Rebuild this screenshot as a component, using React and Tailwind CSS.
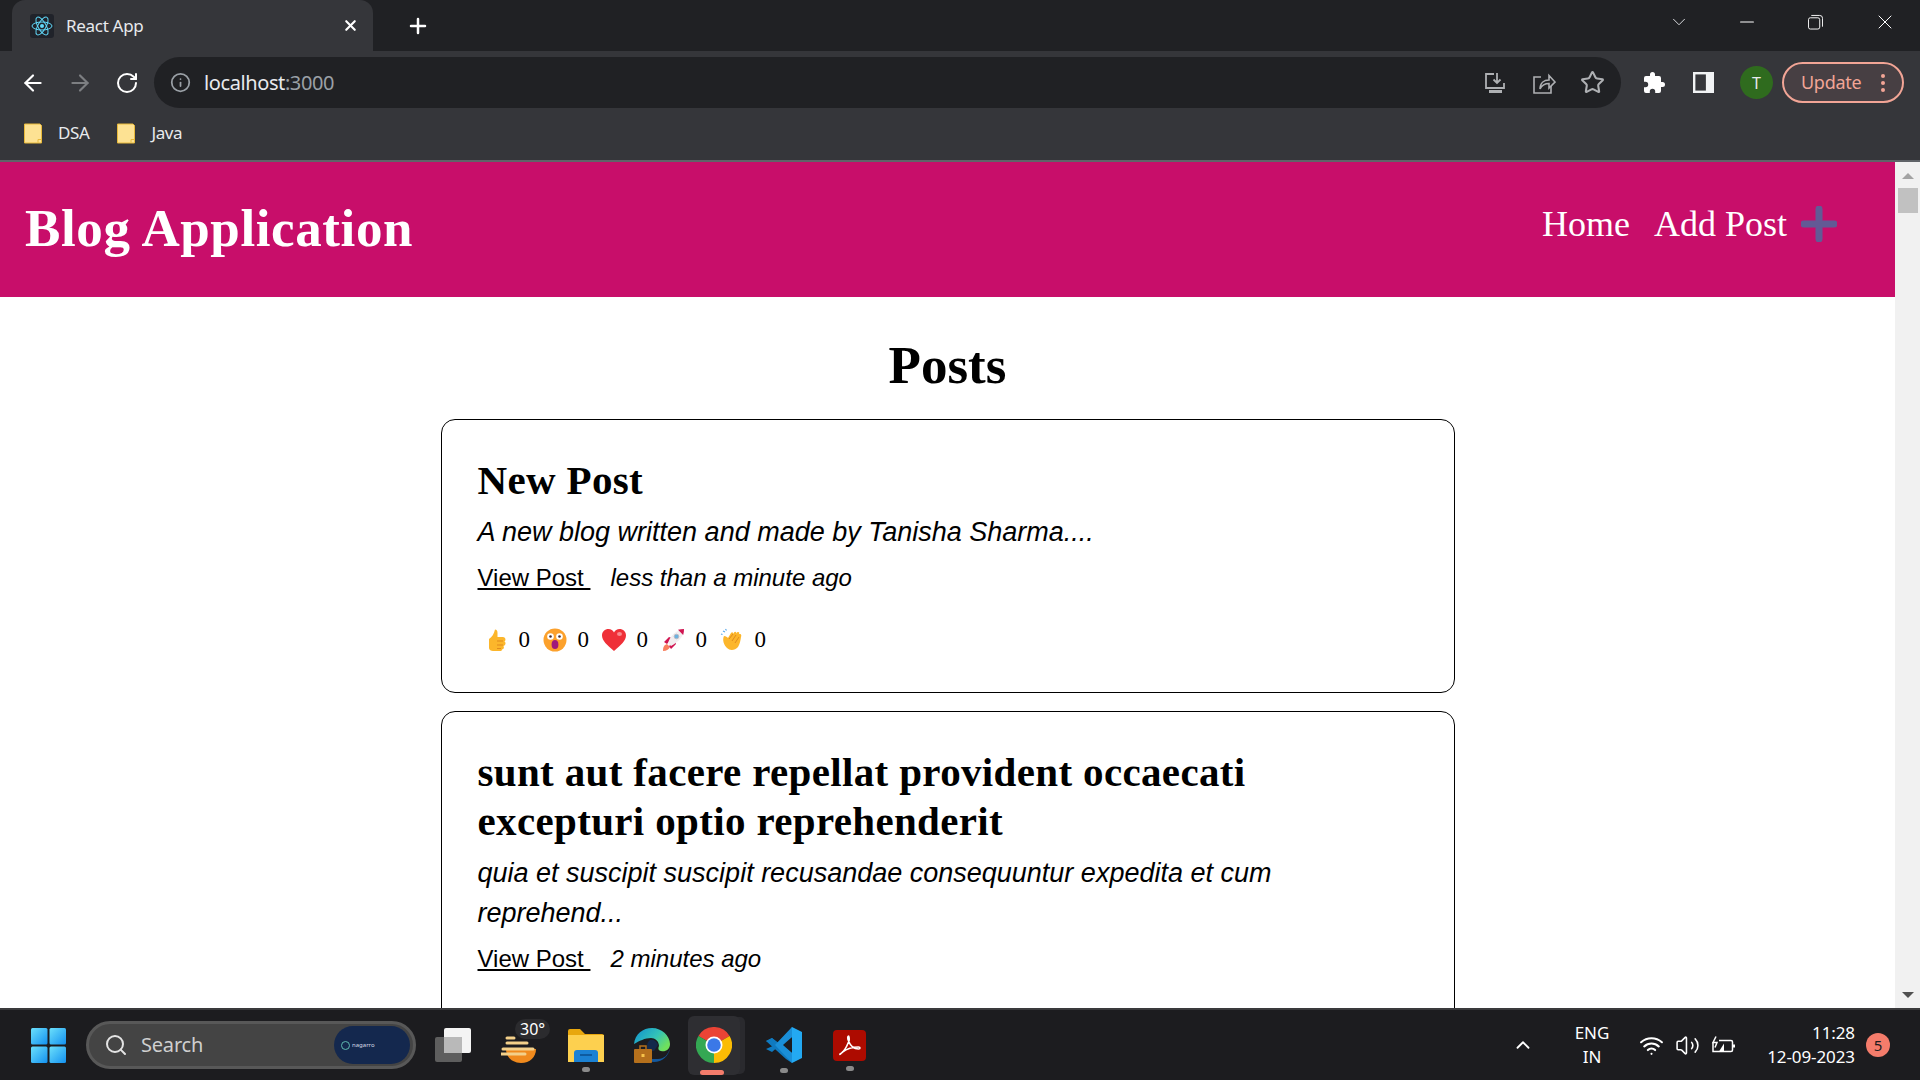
import { ArrowLeft, ArrowRight, RotateCw, Info, Star, Plus, X, Minus, ChevronDown, ChevronUp, Search, Wifi, Volume2 } from 'lucide-react';

const serif = 'font-["Liberation_Serif",serif]';
const ui = 'font-["Noto_Sans",sans-serif]';

const ReactLogo = () => (
  <svg viewBox="0 0 24 24" className="w-[24px] h-[24px] bg-[#20232a] rounded-[3px]" fill="none" stroke="#61dafb" strokeWidth="1">
    <circle cx="12" cy="12" r="2" fill="#61dafb" stroke="none" />
    <ellipse cx="12" cy="12" rx="10" ry="4" />
    <ellipse cx="12" cy="12" rx="10" ry="4" transform="rotate(60 12 12)" />
    <ellipse cx="12" cy="12" rx="10" ry="4" transform="rotate(120 12 12)" />
  </svg>
);

const BookmarkFolder = () => (
  <svg viewBox="0 0 18 20" className="w-[18px] h-[21px]">
    <path d="M0.5 0.5h15.5l1.5 1.5v17.5h-17z" fill="#fde293" stroke="#e8b93a" />
    <path d="M14 19v-3h3.5" fill="none" stroke="#e8b93a" />
  </svg>
);

const DownloadIcon = () => (
  <svg viewBox="0 0 24 24" className="w-[24px] h-[24px]" fill="none" stroke="#aeb0b3" strokeWidth="1.8">
    <path d="M11 3H3v14h18v-5" />
    <path d="M14 2v10M10.5 8.5L14 12l3.5-3.5" />
    <path d="M6 20.5h13" strokeWidth="3" />
  </svg>
);

const ShareIcon = () => (
  <svg viewBox="0 0 24 24" className="w-[24px] h-[24px]" fill="none" stroke="#aeb0b3" strokeWidth="1.6">
    <path d="M9 6H2v16h17v-7" />
    <path d="M8 18c0-6 4-9 9-9V4.500l6 6.500-6 6v-4.500c-4 0-7 1.500-9 5.500z" />
  </svg>
);

const PuzzleIcon = () => (
  <svg viewBox="0 0 24 24" className="w-[24px] h-[24px]" fill="#ffffff">
    <path d="M20.500 11H19V7a2 2 0 0 0-2-2h-4V3.500a2.500 2.500 0 0 0-5 0V5H4a2 2 0 0 0-2 2v3.800h1.500a2.700 2.700 0 0 1 0 5.400H2V20a2 2 0 0 0 2 2h3.800v-1.500a2.700 2.700 0 0 1 5.400 0V22H17a2 2 0 0 0 2-2v-4h1.500a2.500 2.500 0 0 0 0-5z" />
  </svg>
);

const PanelIcon = () => (
  <svg viewBox="0 0 22 26" className="w-[21px] h-[21px]" preserveAspectRatio="none">
    <rect width="22" height="26" fill="#f1f3f4" />
    <rect x="2.500" y="3" width="11" height="20" fill="#35363a" />
  </svg>
);

const RestoreIcon = () => (
  <svg viewBox="0 0 16 16" className="w-[15px] h-[16px]" fill="none" stroke="#ffffff" strokeWidth="1">
    <rect x="0.500" y="3.500" width="12" height="12" rx="2" />
    <path d="M3.500 1h9a3 3 0 0 1 3 3v9" />
  </svg>
);

const Thumb = () => (
  <svg viewBox="0 0 24 24" className="w-[24px] h-[24px]">
    <path d="M11 1.500c1.800 0 2.500 1.500 2.500 3.500v4H19a2.500 2.500 0 0 1 1.500 4.500 2.500 2.500 0 0 1-1 4.500 2.500 2.500 0 0 1-1.500 3.500c0 1-1 1.500-2 1.500H9c-2 0-4-1-4-3V11c3-2 5-5 6-9.500z" fill="#fcb62b" />
    <path d="M13 13h6M13 17h6M13 20.500h4" stroke="#e08a1e" strokeWidth="1" />
  </svg>
);

const Wow = () => (
  <svg viewBox="0 0 24 24" className="w-[24px] h-[24px]">
    <circle cx="12" cy="12" r="11.500" fill="#fca12c" />
    <circle cx="7.500" cy="8.500" r="3.300" fill="#fff" />
    <circle cx="16.500" cy="8.500" r="3.300" fill="#fff" />
    <circle cx="7.500" cy="8.500" r="1.300" fill="#402a32" />
    <circle cx="16.500" cy="8.500" r="1.300" fill="#402a32" />
    <ellipse cx="12" cy="16.500" rx="3.400" ry="4.500" fill="#a0197c" />
  </svg>
);

const Heart = () => (
  <svg viewBox="0 0 24 24" className="w-[24px] h-[24px]">
    <path d="M12 23C5 17 0 12.500 0 7.500 0 3.500 3 1 6.500 1 9 1 11 2.500 12 4.500 13 2.500 15 1 17.500 1 21 1 24 3.500 24 7.500c0 5-5 9.500-12 15.500z" fill="#ef3038" />
    <ellipse cx="17.500" cy="6" rx="2.500" ry="2" fill="#f98a8f" />
  </svg>
);

const Rocket = () => (
  <svg viewBox="0 0 24 24" className="w-[24px] h-[24px]">
    <path d="M2 23c0-4 1-6 4-7l3 3c-1 2-3 4-7 4z" fill="#f8805f" />
    <path d="M3 14l5-5 3 1-5 6zM10 21l5-5-1-3-6 5z" fill="#d01551" />
    <path d="M7 15C9 8 15 2 23 1c0 8-6 13-13 17z" fill="#f2eef0" />
    <path d="M17 1.800c2-.5 4-.8 6-.8 0 2-.3 4-.8 6z" fill="#d01551" />
    <circle cx="15.500" cy="8.500" r="2.300" fill="#6cb2e0" stroke="#b9bcc6" />
  </svg>
);

const Clap = () => (
  <svg viewBox="0 0 24 24" className="w-[24px] h-[24px]">
    <path d="M3 3l2 1M5.500 1l1 1.500M1 6l1.500.5" stroke="#5aa7e8" strokeWidth="1.200" />
    <path d="M4 8c2 0 3 1 4 2l3-5c1-1.500 2.500-.5 2 1l1-1.500c1-1.500 3-.5 2 1l1-1c1.500-1 3 0 2 1.500l1 0c1.500 0 1.500 2 1 3-.5 3-1 7-3 10-3 3.500-8 4-11 1-3-3-5-8-3-12z" fill="#fcb62b" />
    <path d="M9 11l4-5M12 13l4-6M15 15l4-6" stroke="#e08a1e" strokeWidth="1" fill="none" />
  </svg>
);

const reactions = [Thumb, Wow, Heart, Rocket, Clap];

function Reactions() {
  return (
    <div className="flex items-center mt-[32px] h-[28px] pl-[6px]">
      {reactions.map((Emoji, i) => (
        <div key={i} className="flex items-center">
          <Emoji />
          <span className={`${serif} text-[23px] text-black ml-[11px] mr-[11px] w-[13px]`}>0</span>
        </div>
      ))}
    </div>
  );
}

function PostCard({ title, excerpt, time }) {
  return (
    <div className="border border-black rounded-[14px] px-[36px] pt-[36px] pb-[38px] mb-[18px]">
      <h2 className={`${serif} font-bold text-[41px] leading-[49px] text-black tracking-[0.35px]`}>{title}</h2>
      <p className="font-['Liberation_Sans',sans-serif] italic text-[27px] leading-[40px] mt-[7px] text-black">{excerpt}</p>
      <div className="flex items-baseline mt-[10px] font-['Liberation_Sans',sans-serif] text-[24px] leading-[32px] text-black">
        <a className="underline whitespace-pre mr-[20px]">View Post </a>
        <span className="italic">{time}</span>
      </div>
      <Reactions />
    </div>
  );
}

function BrowserChrome() {
  return (
    <div className={`${ui} shrink-0`}>
      {/* tab strip */}
      <div className="h-[51px] bg-[#202124] flex items-end relative">
        <div className="ml-[12px] w-[361px] h-[51px] bg-[#35363a] rounded-t-[13px] flex items-center pl-[18px] pr-[14px]">
          <ReactLogo />
          <span className="ml-[12px] text-[17px] text-[#e8eaed] flex-1 tracking-[-0.3px]">React App</span>
          <X size={17} color="#ffffff" strokeWidth={3} />
        </div>
        <Plus size={24} color="#ffffff" strokeWidth={2.5} className="ml-[33px] mb-[13px]" />
        <div className="ml-auto flex items-center h-[51px] pb-[7px]">
          <ChevronDown size={22} color="#e8eaed" strokeWidth={1} />
          <div className="ml-[46px]"><Minus size={22} color="#ffffff" strokeWidth={1.2} /></div>
          <div className="ml-[50px]"><RestoreIcon /></div>
          <div className="ml-[50px] mr-[23px]"><X size={24} color="#ffffff" strokeWidth={1} /></div>
        </div>
      </div>
      {/* toolbar */}
      <div className="h-[58px] bg-[#35363a] flex items-start pt-[6px]">
        <div className="h-[51px] flex items-center pl-[20px]">
          <ArrowLeft size={26} color="#ffffff" strokeWidth={2} />
          <ArrowRight size={26} color="#7d7f82" strokeWidth={2} className="ml-[21px]" />
          <RotateCw size={24} color="#ffffff" strokeWidth={2} className="ml-[22px]" />
        </div>
        <div className="ml-[15px] w-[1467px] h-[51px] rounded-full bg-[#202124] flex items-center pl-[16px] pr-[16px]">
          <Info size={21} color="#9aa0a6" strokeWidth={2} />
          <span className="ml-[13px] text-[20px] text-[#e8eaed] flex-1 tracking-[-0.4px]">
            localhost<span className="text-[#9aa0a6]">:3000</span>
          </span>
          <DownloadIcon />
          <div className="ml-[25px]"><ShareIcon /></div>
          <Star size={25} color="#aeb0b3" strokeWidth={2} className="ml-[24px]" />
        </div>
        <div className="h-[51px] flex items-center">
          <div className="ml-[21px]"><PuzzleIcon /></div>
          <div className="ml-[27px]"><PanelIcon /></div>
          <div className="ml-[26px] w-[33px] h-[33px] rounded-full bg-[#2f6b1e] text-[#e8eaed] text-[16px] flex items-center justify-center">T</div>
          <div className="ml-[9px] w-[122px] h-[41px] rounded-full border-2 border-[#f2a596] bg-[#473f43] flex items-center pl-[17px]">
            <span className="text-[#f2a596] text-[18px] tracking-[-0.3px]">Update</span>
            <div className="ml-[20px] flex flex-col gap-[3px]">
              <div className="w-[4px] h-[4px] rounded-full bg-[#f2a596]" />
              <div className="w-[4px] h-[4px] rounded-full bg-[#f2a596]" />
              <div className="w-[4px] h-[4px] rounded-full bg-[#f2a596]" />
            </div>
          </div>
        </div>
      </div>
      {/* bookmarks */}
      <div className="h-[53px] bg-[#35363a] border-b-2 border-[#5f6368] flex items-center pl-[24px] pb-[3px] text-[17px] text-[#e8eaed]">
        <BookmarkFolder />
        <span className="ml-[16px] tracking-[-0.4px]">DSA</span>
        <div className="ml-[28px]"><BookmarkFolder /></div>
        <span className="ml-[16px] tracking-[-0.4px]">Java</span>
      </div>
    </div>
  );
}

function Scrollbar() {
  return (
    <div className="w-[25px] shrink-0 bg-[#f1f1f1] flex flex-col items-center pt-[11px] pb-[10px]">
      <div className="w-0 h-0 border-l-[6px] border-r-[6px] border-b-[6px] border-l-transparent border-r-transparent border-b-[#a3a3a3]" />
      <div className="w-[20px] h-[25px] bg-[#c1c1c1] mt-[9px]" />
      <div className="mt-auto w-0 h-0 border-l-[6px] border-r-[6px] border-t-[6px] border-l-transparent border-r-transparent border-t-[#505050]" />
    </div>
  );
}

function Page() {
  return (
    <div className="flex-1 min-h-0 flex overflow-hidden bg-white">
      <div className="flex-1 min-w-0 overflow-hidden">
        <header className="h-[135px] bg-[#c80e6a] flex items-center pl-[25px] pr-[58px] pb-[1px]">
          <h1 className={`${serif} font-bold text-[53px] text-white tracking-[0.6px] mt-[-1px]`}>Blog Application</h1>
          <nav className={`${serif} ml-auto flex items-center text-[36px] text-white mt-[-11px]`}>
            <a>Home</a>
            <a className="ml-[24px]">Add Post</a>
            <svg viewBox="0 0 36 36" className="w-[36px] h-[36px] ml-[14px]">
              <path d="M18 3v30M3 18h30" stroke="#625a95" strokeWidth="7" strokeLinecap="round" />
            </svg>
          </nav>
        </header>
        <h1 className={`${serif} font-bold text-[53px] leading-[60px] text-black text-center mt-[38px] mb-[24px]`}>Posts</h1>
        <div className="w-[1014px] mx-auto">
          <PostCard title="New Post" excerpt="A new blog written and made by Tanisha Sharma...." time="less than a minute ago" />
          <PostCard
            title="sunt aut facere repellat provident occaecati excepturi optio reprehenderit"
            excerpt="quia et suscipit suscipit recusandae consequuntur expedita et cum reprehend..."
            time="2 minutes ago"
          />
        </div>
      </div>
      <Scrollbar />
    </div>
  );
}

const WinLogo = () => (
  <svg viewBox="0 0 35 35" className="w-[35px] h-[35px]">
    <defs>
      <linearGradient id="win" x1="0" y1="0" x2="1" y2="1">
        <stop offset="0" stopColor="#6ce0fb" />
        <stop offset="1" stopColor="#1391f0" />
      </linearGradient>
    </defs>
    <rect width="16.500" height="16.500" rx="1.500" fill="url(#win)" />
    <rect x="18.500" width="16.500" height="16.500" rx="1.500" fill="url(#win)" />
    <rect y="18.500" width="16.500" height="16.500" rx="1.500" fill="url(#win)" />
    <rect x="18.500" y="18.500" width="16.500" height="16.500" rx="1.500" fill="url(#win)" />
  </svg>
);

const TaskView = () => (
  <svg viewBox="0 0 36 34" className="w-[36px] h-[34px]">
    <rect y="9" width="27" height="25" rx="2" fill="#5e5e5e" />
    <rect x="9" width="27" height="25" rx="2" fill="#f4f4f4" />
    <rect x="9" y="9" width="18" height="16" fill="#b9b9b9" />
  </svg>
);

const Weather = () => (
  <svg viewBox="0 0 36 28" className="w-[36px] h-[28px]">
    <path d="M5 14h30c0 8-6 14-15 14S5 22 5 14z" fill="#f08a1d" />
    <path d="M6 3h7M6 8h20M2 14h30M0 19h24" stroke="#f3d08a" strokeWidth="3" strokeLinecap="round" />
  </svg>
);

const Explorer = () => (
  <svg viewBox="0 0 36 33" className="w-[36px] h-[33px]">
    <path d="M0 2a2 2 0 0 1 2-2h10l5 5h17a2 2 0 0 1 2 2v8H0z" fill="#e8a70e" />
    <path d="M0 6h36v27H0z" fill="#fdd04f" />
    <path d="M6 24a3 3 0 0 1 3-3h18a3 3 0 0 1 3 3v9H6z" fill="#1b81d3" />
    <path d="M12 26h12" stroke="#0b4f8f" strokeWidth="1.500" />
  </svg>
);

const Edge = () => (
  <svg viewBox="0 0 36 35" className="w-[36px] h-[35px]">
    <defs>
      <linearGradient id="edge" x1="0" y1="0" x2="1" y2="0.600">
        <stop offset="0" stopColor="#0f8fd0" />
        <stop offset="0.600" stopColor="#33c3b8" />
        <stop offset="1" stopColor="#6fe05d" />
      </linearGradient>
    </defs>
    <path d="M0 16C1 6 9 0 18 0c10 0 18 8 18 16 0 6-5 8-9 7-3-.5-3-3-2-5 0-5-4-8-8-8-6 0-12 3-17 6z" fill="url(#edge)" />
    <path d="M36 20c-1 8-8 14-16 14-3 0-6-1-8-3h12c6 0 10-4 12-11z" fill="#13589e" />
    <path d="M16 12c3-1 7 1 8 5l-4 6h-6c-2-4-1-9 2-11z" fill="#13294b" />
    <rect y="21" width="18" height="14" rx="1" fill="#b5701c" />
    <rect x="6" y="18" width="6" height="4" fill="none" stroke="#b5701c" strokeWidth="1.500" />
    <rect x="7.500" y="26" width="3" height="3" fill="#f7c34a" />
  </svg>
);

const ChromeLogo = () => (
  <svg viewBox="0 0 36 36" className="w-[36px] h-[36px]">
    <path d="M18 18L2.400 9A18 18 0 0 1 33.600 9z" fill="#ea4335" />
    <path d="M18 18L33.600 9A18 18 0 0 1 18 36z" fill="#fbbc04" />
    <path d="M18 18L18 36A18 18 0 0 1 2.400 9z" fill="#34a853" />
    <circle cx="18" cy="18" r="8.500" fill="#fff" />
    <circle cx="18" cy="18" r="6.800" fill="#3b78e7" />
  </svg>
);

const VSCode = () => (
  <svg viewBox="0 0 36 36" className="w-[36px] h-[36px]">
    <path d="M26 0l10 5v26l-10 5z" fill="#23a9f2" />
    <path d="M26 0v10L14 18 6 25 0 22l9-4-9-4 6-3 8 7z" fill="#0f7ac0" />
    <path d="M26 36V26L6 11 0 14l20 18z" fill="#0f7ac0" />
    <path d="M26 0L9 18l17 18v-10l-9-8 9-8z" fill="#1a8fd8" />
  </svg>
);

const Acrobat = () => (
  <svg viewBox="0 0 33 31" className="w-[33px] h-[31px]">
    <rect width="33" height="31" rx="4" fill="#ad0b00" />
    <path d="M7 24c3-1 7-8 9-13 .5-2 0-5-.5-5-1 0-1 3 0 5 2 5 5 8 10 8 2 0 2-2 0-2-5 0-12 2-16 5-2 2-3 3-2.500 2z" fill="none" stroke="#fff" strokeWidth="1.600" />
  </svg>
);

const RunDot = () => <div className="absolute bottom-[-10px] left-1/2 -translate-x-1/2 w-[8px] h-[5px] rounded-full bg-[#8a8a8a]" />;

function Taskbar() {
  return (
    <div className={`${ui} h-[72px] shrink-0 bg-[#1c1c1f] border-t-2 border-[#3a3a3c] flex items-center text-white`}>
      <div className="ml-[31px]"><WinLogo /></div>
      <div className="ml-[20px] w-[330px] h-[48px] rounded-full bg-[#444444] border-[3px] border-[#585858] flex items-center pl-[15px] pr-[3px]">
        <Search size={24} color="#e4e4e4" strokeWidth={2} />
        <span className="ml-[13px] text-[20px] text-[#cfcfcf] tracking-[-0.2px] flex-1">Search</span>
        <div className="w-[76px] h-[38px] rounded-full bg-[#14284e] flex items-center pl-[7px] gap-[2px]">
          <div className="w-[9px] h-[9px] rounded-full border border-[#5fb8b0]" />
          <span className="text-[6px] text-[#d5dbe6]">nagarro</span>
        </div>
      </div>
      <div className="ml-[19px]"><TaskView /></div>
      <div className="ml-[30px] relative pt-[8px]">
        <Weather />
        <span className="absolute top-[-8px] left-[14px] px-[5px] rounded-full bg-[#2b2b2e] text-[16px] leading-[20px]">30°</span>
      </div>
      <div className="ml-[31px] relative"><Explorer /><RunDot /></div>
      <div className="ml-[30px]"><Edge /></div>
      <div className="ml-[18px] relative w-[52px] h-[59px] rounded-[6px] bg-[#2e2e32] flex items-center justify-center shadow-[6px_0_0_-1px_#2a2a2e]">
        <ChromeLogo />
        <div className="absolute bottom-[0px] left-[12px] w-[24px] h-[5px] rounded-full bg-[#f47c6b]" />
      </div>
      <div className="ml-[26px] relative"><VSCode /><RunDot /></div>
      <div className="ml-[31px] relative"><Acrobat /><RunDot /></div>
      {/* tray */}
      <div className="ml-auto flex items-center">
        <ChevronUp size={22} strokeWidth={2} />
        <div className="ml-[38px] w-[40px] text-center text-[17px] leading-[24px]">ENG<br />IN</div>
        <Wifi size={25} strokeWidth={2} className="ml-[27px]" />
        <Volume2 size={25} strokeWidth={1.500} className="ml-[11px]" />
        <svg viewBox="0 0 24 18" className="w-[24px] h-[19px] ml-[11px]" fill="none" stroke="#fff" strokeWidth="1.500">
          <path d="M8 4h12a1.500 1.500 0 0 1 1.500 1.500v8A1.500 1.500 0 0 1 20 15H2V6" />
          <path d="M22 8h2v3h-2z" fill="#fff" stroke="none" />
          <path d="M5 0L2 6h4l-2 5" />
          <path d="M8 15l5-8v8z" fill="#fff" stroke="none" />
        </svg>
        <div className="ml-[16px] w-[104px] text-right text-[17px] leading-[24px] tracking-[-0.1px]">11:28<br />12-09-2023</div>
        <div className="ml-[11px] mr-[30px] w-[24px] h-[24px] rounded-full bg-[#f47c6b] text-[#1c1c1f] text-[15px] flex items-center justify-center">5</div>
      </div>
    </div>
  );
}

export default function App() {
  return (
    <div className="w-[1920px] h-[1080px] flex flex-col overflow-hidden">
      <BrowserChrome />
      <Page />
      <Taskbar />
    </div>
  );
}
